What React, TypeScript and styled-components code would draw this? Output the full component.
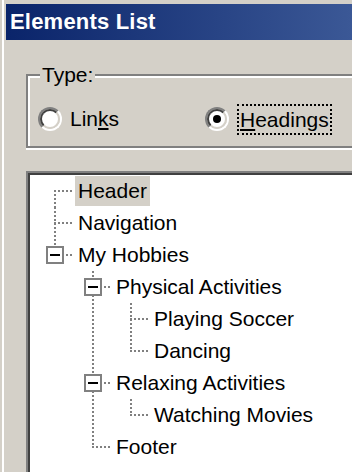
import React from "react";
import styled, { createGlobalStyle } from "styled-components";

type TreeNode = {
  label: string;
  selected?: boolean;
  children?: TreeNode[];
};

type FlatRow = {
  node: TreeNode;
  guides: boolean[];
  isFirstRoot: boolean;
  isLast: boolean;
};

const tree: TreeNode[] = [
  { label: "Header", selected: true },
  { label: "Navigation" },
  {
    label: "My Hobbies",
    children: [
      {
        label: "Physical Activities",
        children: [{ label: "Playing Soccer" }, { label: "Dancing" }],
      },
      {
        label: "Relaxing Activities",
        children: [{ label: "Watching Movies" }],
      },
      { label: "Footer" },
    ],
  },
];

const flatten = (nodes: TreeNode[], guides: boolean[] = []): FlatRow[] => {
  const rows: FlatRow[] = [];
  nodes.forEach((node, idx) => {
    const isLast = idx === nodes.length - 1;
    rows.push({
      node,
      guides,
      isFirstRoot: guides.length === 0 && idx === 0,
      isLast,
    });
    if (node.children) {
      rows.push(...flatten(node.children, [...guides, !isLast]));
    }
  });
  return rows;
};

const GlobalStyle = createGlobalStyle`
  html, body {
    margin: 0;
    overflow: hidden;
    background: #d4d0c8;
  }
  body {
    font-family: "Liberation Sans", Arial, sans-serif;
  }
`;

// the screenshot is a crop of a wider window: right side has no frame
const Window = styled.div`
  width: 352px;
  height: 472px;
  box-sizing: border-box;
  padding: 4px 0 0 6px;
  background: #d4d0c8;
  box-shadow: inset 2px 0 0 #d4d0c8, inset 4px 0 0 #fff;
  display: flex;
  flex-direction: column;
  overflow: hidden;
`;

const TitleBar = styled.div`
  height: 36px;
  flex: none;
  padding-left: 4px;
  display: flex;
  align-items: center;
  background: linear-gradient(to right, #0a246a 0, #3b5896 100%);
  color: #fff;
  font-weight: bold;
  font-size: 22px;
  letter-spacing: 0.2px;
`;

const Content = styled.div`
  flex: 1;
  display: flex;
  flex-direction: column;
  padding: 34px 0 0 20px;
  min-height: 0;
`;

const GroupBox = styled.div`
  position: relative;
  border: 2px solid #808080;
  border-right: none;
  box-shadow: inset 2px 2px 0 #fff, 0 2px 0 #fff;
  padding: 27px 0 11px 10px;
`;

const Legend = styled.span`
  position: absolute;
  top: -13px;
  left: 12px;
  padding: 0 2px;
  background: #d4d0c8;
  font-size: 21px;
  line-height: 24px;
  color: #000;
`;

const RadioRow = styled.div`
  display: flex;
  align-items: center;
  height: 32px;
`;

const RadioOption = styled.label<{ $width?: number }>`
  display: flex;
  align-items: center;
  gap: 8px;
  width: ${(p) => (p.$width ? `${p.$width}px` : "auto")};
  font-size: 21px;
  color: #000;
`;

const RadioOuter = styled.span`
  width: 24px;
  height: 24px;
  flex: none;
  box-sizing: border-box;
  border-radius: 50%;
  border: 2px solid;
  border-color: #808080 #fff #fff #808080;
  display: flex;
  align-items: center;
  justify-content: center;
`;

const RadioInner = styled.span`
  width: 20px;
  height: 20px;
  box-sizing: border-box;
  border-radius: 50%;
  border: 2px solid;
  border-color: #404040 #d4d0c8 #d4d0c8 #404040;
  background: #fff;
  display: flex;
  align-items: center;
  justify-content: center;
`;

const RadioDot = styled.span`
  width: 8px;
  height: 8px;
  border-radius: 50%;
  background: #000;
`;

const FocusRect = styled.span`
  border: 2px dotted #000;
  height: 27px;
  line-height: 27px;
  padding: 0 1px;
`;

const Key = styled.span`
  text-decoration: underline;
  text-underline-offset: 2px;
  text-decoration-thickness: 2px;
`;

const TreeBox = styled.div`
  flex: 1;
  margin-top: 23px;
  border-top: 2px solid #808080;
  border-left: 2px solid #808080;
  box-shadow: inset 2px 2px 0 #404040;
  background: #fff;
  padding: 2px 0 0 8px;
`;

const Row = styled.div`
  display: flex;
  align-items: center;
  height: 32px;
`;

const Cell = styled.div`
  position: relative;
  width: 38px;
  height: 32px;
  flex: none;
`;

const VLine = styled.span<{ $top: number; $bottom: number }>`
  position: absolute;
  left: 18px;
  width: 2px;
  top: ${(p) => p.$top}px;
  bottom: ${(p) => p.$bottom}px;
  background: repeating-linear-gradient(
    to bottom,
    #808080 0 2px,
    transparent 2px 4px
  );
`;

const HLine = styled.span`
  position: absolute;
  left: 18px;
  top: 15px;
  width: 18px;
  height: 2px;
  background: repeating-linear-gradient(
    to right,
    #808080 0 2px,
    transparent 2px 4px
  );
`;

const Expander = styled.span`
  position: absolute;
  left: 10px;
  top: 7px;
  width: 18px;
  height: 18px;
  box-sizing: border-box;
  border: 2px solid #808080;
  background: #fff;
  display: flex;
  align-items: center;
  justify-content: center;
  &::after {
    content: "";
    width: 10px;
    height: 2px;
    background: #000;
  }
`;

const NodeLabel = styled.span<{ $selected?: boolean }>`
  margin-left: 1px;
  padding: 0 3px;
  height: 30px;
  line-height: 30px;
  font-size: 21px;
  color: #000;
  white-space: nowrap;
  background: ${(p) => (p.$selected ? "#d4d0c8" : "transparent")};
`;

const Radio = ({ checked }: { checked?: boolean }) => (
  <RadioOuter>
    <RadioInner>{checked && <RadioDot />}</RadioInner>
  </RadioOuter>
);

const TreeRow = ({ row }: { row: FlatRow }) => (
  <Row>
    {row.guides.map((on, i) => (
      <Cell key={i}>{on && <VLine $top={0} $bottom={0} />}</Cell>
    ))}
    <Cell>
      <VLine $top={row.isFirstRoot ? 15 : 0} $bottom={row.isLast ? 16 : 0} />
      <HLine />
      {row.node.children && <Expander />}
    </Cell>
    <NodeLabel $selected={row.node.selected}>{row.node.label}</NodeLabel>
  </Row>
);

const App = () => {
  const rows = flatten(tree);

  return (
    <>
      <GlobalStyle />
      <Window>
        <TitleBar>Elements List</TitleBar>
        <Content>
          <GroupBox>
            <Legend>Type:</Legend>
            <RadioRow>
              <RadioOption $width={167}>
                <Radio />
                <span>
                  Lin<Key>k</Key>s
                </span>
              </RadioOption>
              <RadioOption>
                <Radio checked />
                <FocusRect>
                  <Key>H</Key>eadings
                </FocusRect>
              </RadioOption>
            </RadioRow>
          </GroupBox>
          <TreeBox>
            {rows.map((row, i) => (
              <TreeRow key={i} row={row} />
            ))}
          </TreeBox>
        </Content>
      </Window>
    </>
  );
};

export default App;
